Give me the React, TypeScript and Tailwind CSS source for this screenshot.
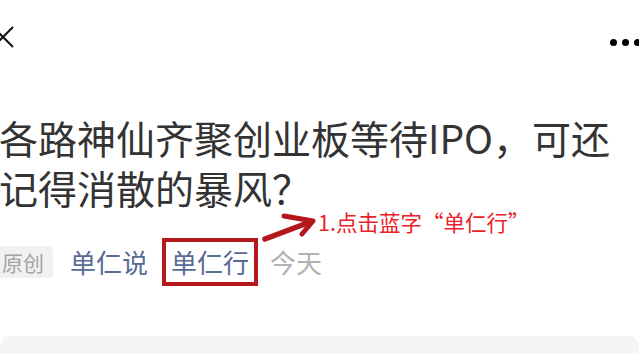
import React from 'react';

const cjk = { fontFamily: '"Noto Sans CJK SC", "Noto Sans", sans-serif' };

export default function App() {
  return (
    <div className="relative w-[639px] h-[354px] overflow-hidden bg-white" style={cjk}>
      {/* top bar */}
      <div className="flex items-start justify-between h-[112px]">
        <svg width="22" height="22" viewBox="0 0 22 22" className="-ml-[8px] mt-[26px]">
          <path d="M1 1 L21 21 M21 1 L1 21" stroke="#111" strokeWidth="2" fill="none" />
        </svg>
        <div className="flex items-center gap-[5px] mt-[39px] -mr-[2px]">
          <span className="w-[7px] h-[7px] rounded-full bg-black" />
          <span className="w-[7px] h-[7px] rounded-full bg-black" />
          <span className="w-[7px] h-[7px] rounded-full bg-black" />
        </div>
      </div>

      {/* title */}
      <h1 className="text-[39px] leading-[50px] font-normal text-[#333333] -ml-[1px]">
        各路神仙齐聚创业板等待IPO，可还
        <br />
        记得消散的暴风？
      </h1>

      {/* meta row */}
      <div className="flex items-center mt-[26px] h-[48px]">
        <span className="flex items-center h-[32px] pl-[2px] pr-[9px] rounded-r-[4px] bg-[#f1f1f1] text-[21px] text-[#a3a3a3] leading-none">
          原创
        </span>
        <span className="ml-[17px] text-[26px] text-[#576b95] leading-none">单仁说</span>
        <span className="ml-[14px] flex items-center h-[48px] border-[4px] border-[#b5191c] px-[5px] text-[26px] text-[#576b95] leading-none">
          单仁行
        </span>
        <span className="ml-[12px] text-[26px] text-[#b2b2b2] leading-none">今天</span>
      </div>

      {/* bottom card */}
      <div className="mt-[50px] h-[40px] rounded-t-[10px] bg-[#f5f5f5]" />

      {/* annotation */}
      <svg className="absolute left-0 top-0" width="639" height="354" viewBox="0 0 639 354">
        <path d="M265 239 L310 222" stroke="#b3161b" strokeWidth="5.5" strokeLinecap="round" fill="none" />
        <path d="M284 216 L313 221 L302 234" stroke="#b3161b" strokeWidth="5" strokeLinecap="round" strokeLinejoin="round" fill="none" />
      </svg>
      <span className="absolute left-[318px] top-[208px] text-[21.5px] leading-[28px] text-[#e8222a] whitespace-nowrap">
        1.点击蓝字“单仁行”
      </span>
    </div>
  );
}
